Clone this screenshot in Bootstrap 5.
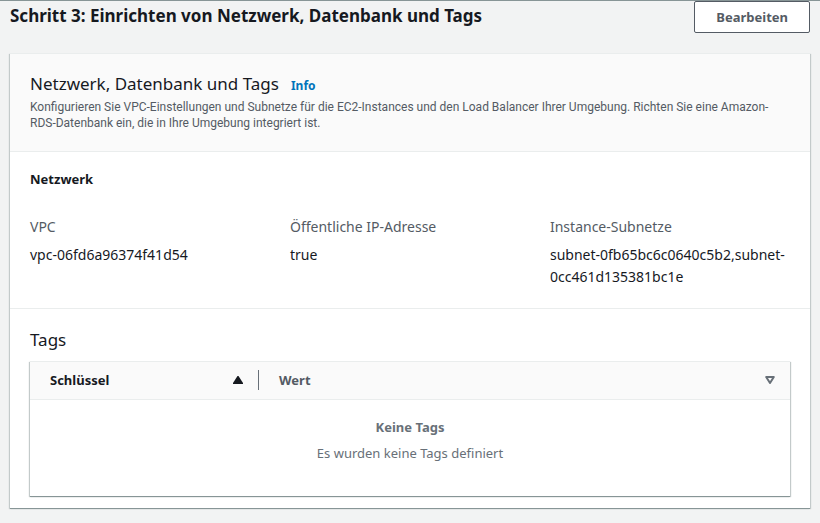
<!DOCTYPE html>
<html lang="de">
<head>
<meta charset="utf-8">
<meta name="viewport" content="width=device-width, initial-scale=1">
<title>Schritt 3: Einrichten von Netzwerk, Datenbank und Tags</title>
<link href="https://cdn.jsdelivr.net/npm/bootstrap@5.3.0/dist/css/bootstrap.min.css" rel="stylesheet">
<style>
  :root { --ink: #16191f; --muted: #545b64; --soft: #687078; --line: #eaeded; --pale: #fafafa; }
  body { background: #f2f3f3; color: var(--ink); font-family: "Noto Sans", "Open Sans", sans-serif; font-size: 13px; line-height: 22px; border-top: 1px solid #879596; }
  .page { padding: 0 10px; }
  .page-head { margin-bottom: 20px; }
  .step-title { font-size: 17px; line-height: 30px; font-weight: 700; }
  .section-title { font-size: 17px; line-height: 24px; font-weight: 400; }
  .sub-title { font-size: 13px; line-height: 22px; font-weight: 700; margin-bottom: 26px; }
  .btn-edit { --bs-btn-color: var(--muted); --bs-btn-bg: #fff; --bs-btn-border-color: var(--muted); --bs-btn-hover-color: var(--ink); --bs-btn-hover-bg: var(--pale); --bs-btn-border-radius: 2px; --bs-btn-font-size: 13px; --bs-btn-font-weight: 700; --bs-btn-padding-x: 21px; --bs-btn-padding-y: 4px; --bs-btn-line-height: 22px; }
  .panel { background: #fff; border-top: 1px solid var(--line); box-shadow: 0 1px 0 0 #879596, 1px 1px 1px 0 #c3caca, -1px 1px 1px 0 #c3caca; }
  .panel-top { background: var(--pale); border-bottom: 1px solid var(--line); padding: 18px 20px 20px; }
  .title-line { gap: 12px; }
  .info-link { color: #0073bb; font-size: 12px; font-weight: 700; }
  .hint { color: var(--muted); font-family: Roboto, "Noto Sans", sans-serif; font-size: 12px; line-height: 16px; margin: 2px 0 0; }
  .net { border-bottom: 1px solid var(--line); padding: 16px 20px 20px; }
  .field-row { --bs-gutter-x: 20px; font-size: 14px; }
  .field-label { color: var(--muted); font-weight: 400; margin-bottom: 6px; }
  .tags-area { padding: 19px 20px 12px; }
  .tags-title { margin-bottom: 9px; }
  .tag-table { color: var(--ink); table-layout: fixed; }
  .tag-table th { background: var(--pale); border-bottom: 1px solid var(--line); padding: 8px 0 9px; }
  .key-col { width: 229px; }
  .sort-btn { color: var(--ink); font-weight: 700; padding: 0 15px 0 20px; height: 20px; line-height: 20px; }
  .key-sort { border-right: 1px solid var(--soft) !important; }
  .value-sort { color: var(--muted); }
  .tag-table td { color: var(--soft); padding: 16px 20px 32px; }
</style>
<script src="https://cdn.jsdelivr.net/npm/bootstrap@5.3.0/dist/js/bootstrap.bundle.min.js"></script>
</head>
<body class="min-vh-100">
<main class="page">
  <div class="page-head d-flex justify-content-between align-items-start">
    <h1 class="step-title m-0">Schritt 3: Einrichten von Netzwerk, Datenbank und Tags</h1>
    <button type="button" class="btn btn-edit">Bearbeiten</button>
  </div>
  <section class="panel">
    <header class="panel-top">
      <div class="title-line d-flex align-items-baseline">
        <h2 class="section-title m-0">Netzwerk, Datenbank und Tags</h2>
        <a class="info-link text-decoration-none" href="#info">Info</a>
      </div>
      <p class="hint">Konfigurieren Sie VPC-Einstellungen und Subnetze für die EC2-Instances und den Load Balancer Ihrer Umgebung. Richten Sie eine Amazon-RDS-Datenbank ein, die in Ihre Umgebung integriert ist.</p>
    </header>
    <div class="net">
      <h3 class="sub-title">Netzwerk</h3>
      <dl class="field-row row mb-0">
        <div class="col-4"><dt class="field-label">VPC</dt><dd class="m-0">vpc-06fd6a96374f41d54</dd></div>
        <div class="col-4"><dt class="field-label">Öffentliche IP-Adresse</dt><dd class="m-0">true</dd></div>
        <div class="col-4"><dt class="field-label">Instance-Subnetze</dt><dd class="m-0">subnet-0fb65bc6c0640c5b2,subnet-0cc461d135381bc1e</dd></div>
      </dl>
    </div>
    <div class="tags-area">
      <h2 class="section-title tags-title">Tags</h2>
      <div class="panel">
        <table class="tag-table w-100">
          <thead>
            <tr>
              <th class="key-col" scope="col" aria-sort="ascending">
                <button type="button" class="sort-btn key-sort w-100 border-0 bg-transparent d-flex align-items-center justify-content-between">Schlüssel
                  <svg width="10" height="8" viewBox="0 0 10 8" aria-hidden="true"><path d="M4.5 0h1L10 7v1H0V7z" fill="#16191f"/></svg>
                </button>
              </th>
              <th scope="col">
                <button type="button" class="sort-btn value-sort w-100 border-0 bg-transparent d-flex align-items-center justify-content-between">Wert
                  <svg width="10" height="8" viewBox="0 0 10 8" aria-hidden="true"><path d="M1.2 1h7.6L5 7z" fill="none" stroke="#687078" stroke-width="2" stroke-linejoin="round"/></svg>
                </button>
              </th>
            </tr>
          </thead>
          <tbody>
            <tr><td colspan="2" class="text-center"><strong class="d-block mb-1">Keine Tags</strong>Es wurden keine Tags definiert</td></tr>
          </tbody>
        </table>
      </div>
    </div>
  </section>
</main>
</body>
</html>
